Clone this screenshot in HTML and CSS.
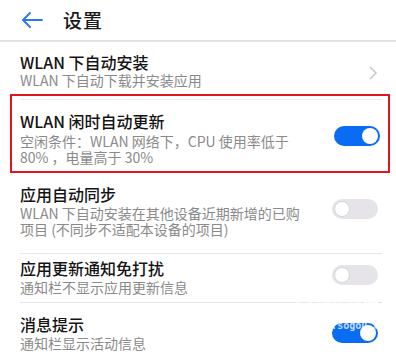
FILE: index.html
```html
<!DOCTYPE html>
<html lang="zh-CN">
<head>
<meta charset="utf-8">
<link rel="stylesheet" href="styles.css">
</head>
<body>
<div class="screen">
  <header class="header">
    <svg class="back" width="22" height="18" viewBox="0 0 22 18"><path d="M9 2 L2 9 L9 16 M2 9 H21" fill="none" stroke="#2b7be6" stroke-width="2" stroke-linecap="round" stroke-linejoin="round"/></svg>
    <span class="htitle">设置</span>
  </header>

  <div class="row row-first">
    <div class="text">
      <div class="title">WLAN 下自动安装</div>
      <div class="sub">WLAN 下自动下载并安装应用</div>
    </div>
    <svg class="chev" width="10" height="16" viewBox="0 0 10 16"><path d="M2 2 L8 8 L2 14" fill="none" stroke="#c4c4c4" stroke-width="1.4"/></svg>
  </div>

  <div class="highlight">
    <div class="inner-line"></div>
    <div class="row row-hl">
      <div class="text">
        <div class="title">WLAN 闲时自动更新</div>
        <div class="sub">空闲条件：WLAN 网络下，CPU 使用率低于<br>80% ，电量高于 30%</div>
      </div>
      <span class="toggle on up"><span class="knob"></span></span>
    </div>
  </div>

  <div class="row row-sync divided">
    <div class="text">
      <div class="title">应用自动同步</div>
      <div class="sub">WLAN 下自动安装在其他设备近期新增的已购<br>项目 (不同步不适配本设备的项目)</div>
    </div>
    <span class="toggle off up"><span class="knob"></span></span>
  </div>

  <div class="row row-notify divided">
    <div class="text">
      <div class="title">应用更新通知免打扰</div>
      <div class="sub">通知栏不显示应用更新信息</div>
    </div>
    <span class="toggle off up"><span class="knob"></span></span>
  </div>

  <div class="row row-msg">
    <div class="text">
      <div class="title">消息提示</div>
      <div class="sub">通知栏显示活动信息</div>
    </div>
    <span class="toggle on"><span class="knob"></span></span>
  </div>

  <div class="watermark">
    <div class="wm-logo"><span class="wm-s">S</span>搜狗指南</div>
    <div class="wm-url">zhinan.sogou.com</div>
  </div>
</div>
</body>
</html>
```

FILE: styles.css
```css
html, body {
  margin: 0;
  padding: 0;
  background: #ffffff;
}
body {
  font-family: "Noto Sans CJK SC", "Noto Sans", "Liberation Sans", sans-serif;
  color: #1a1a1a;
}
.screen {
  position: relative;
  width: 396px;
  height: 356px;
  overflow: hidden;
}
.header {
  height: 40px;
  border-bottom: 2px solid #e2e2e2;
  display: flex;
  align-items: center;
  padding-left: 21px;
  gap: 20px;
}
.back {
  display: block;
}
.htitle {
  font-size: 19px;
  font-weight: 500;
  line-height: 20px;
  letter-spacing: 1px;
}
.row {
  display: flex;
  align-items: center;
  justify-content: space-between;
  padding: 0 18px 0 20px;
}
.text {
  display: flex;
  flex-direction: column;
}
.title {
  font-size: 16px;
  font-weight: 500;
  line-height: 20px;
  color: #141414;
}
.sub {
  font-size: 14px;
  line-height: 16px;
  color: #8a8a8a;
  margin-top: 1px;
}
.row-first {
  height: 52px;
  box-sizing: border-box;
  align-items: flex-start;
  padding-top: 10px;
}
.row-first .sub { margin-top: 0; }
.chev {
  margin-top: 13px;
}
.highlight {
  margin: 0 6px 0 10px;
  border: 2px solid #e0161e;
  height: 75px;
}
.inner-line {
  margin: 3px 6px 0 8px;
  height: 1px;
  background: #ececec;
}
.row-hl {
  padding: 11px 8px 0 8px;
}
.row-hl .sub { margin-top: 2px; }
.row-sync {
  padding-top: 11px;
  padding-bottom: 17px;
}
.row-notify {
  padding-top: 4px;
  padding-bottom: 8px;
}
.row-msg {
  padding-top: 11px;
}
.divided {
  position: relative;
}
.divided::after {
  content: "";
  position: absolute;
  left: 20px;
  right: 14px;
  bottom: 0;
  height: 1px;
  background: #e6e6e6;
}
.toggle {
  flex: none;
  width: 46px;
  height: 20px;
  border-radius: 10px;
  display: flex;
  align-items: center;
  box-sizing: border-box;
  padding: 0 2px;
}
.toggle.up {
  margin-bottom: 4px;
}
.toggle .knob {
  width: 16px;
  height: 16px;
  border-radius: 50%;
  background: #ffffff;
  box-sizing: border-box;
}
.toggle.on {
  background: #0a6cf2;
  justify-content: flex-end;
}
.toggle.off {
  background: #e6e4e8;
  justify-content: flex-start;
}
.toggle.off .knob {
  border: 1px solid #d6d4d8;
}
.watermark {
  position: absolute;
  left: 295px;
  top: 298px;
  color: rgba(255, 255, 255, 0.75);
  pointer-events: none;
}
.wm-logo {
  font-size: 16px;
  line-height: 18px;
  display: flex;
  align-items: center;
  gap: 2px;
}
.wm-s {
  display: inline-block;
  width: 14px;
  height: 14px;
  border-radius: 50%;
  border: 2px solid rgba(255, 255, 255, 0.75);
  font-size: 11px;
  line-height: 14px;
  text-align: center;
  font-weight: 700;
}
.wm-url {
  font-family: "DejaVu Sans Mono", monospace;
  font-size: 10px;
  line-height: 12px;
  margin-top: 4px;
  font-weight: 700;
}
```
